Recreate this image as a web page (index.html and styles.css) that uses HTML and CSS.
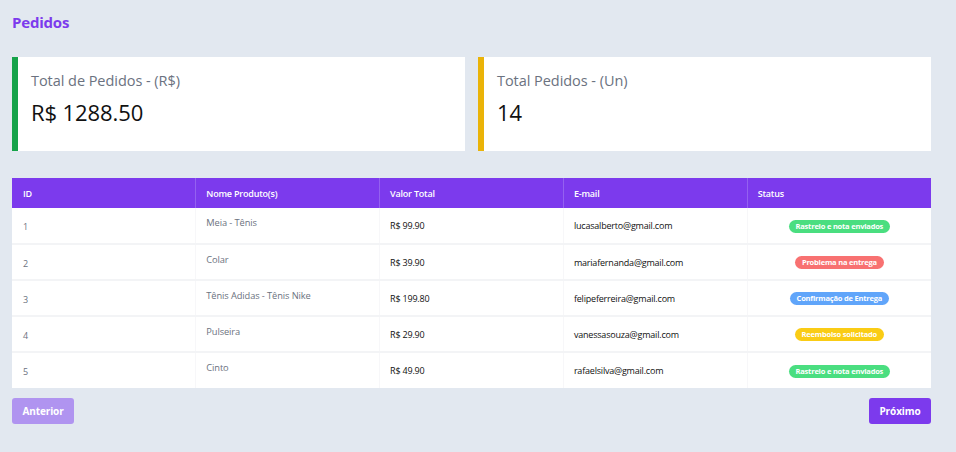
FILE: index.html
```html
<!DOCTYPE html>
<html lang="pt-BR">
<head>
<meta charset="utf-8">
<title>Pedidos</title>
<link rel="stylesheet" href="styles.css">
</head>
<body>
<main class="page">
  <h1 class="title">Pedidos</h1>
  <section class="cards">
    <div class="card card-green">
      <div class="card-label">Total de Pedidos - (R$)</div>
      <div class="card-value">R$ 1288.50</div>
    </div>
    <div class="card card-yellow">
      <div class="card-label">Total Pedidos - (Un)</div>
      <div class="card-value">14</div>
    </div>
  </section>
  <table class="orders">
    <thead>
      <tr><th>ID</th><th>Nome Produto(s)</th><th>Valor Total</th><th>E-mail</th><th>Status</th></tr>
    </thead>
    <tbody>
      <tr><td class="id">1</td><td class="name">Meia - Tênis</td><td>R$ 99.90</td><td>lucasalberto@gmail.com</td><td class="status"><span class="badge green">Rastreio e nota enviados</span></td></tr>
      <tr><td class="id">2</td><td class="name">Colar</td><td>R$ 39.90</td><td>mariafernanda@gmail.com</td><td class="status"><span class="badge red">Problema na entrega</span></td></tr>
      <tr><td class="id">3</td><td class="name">Tênis Adidas - Tênis Nike</td><td>R$ 199.80</td><td>felipeferreira@gmail.com</td><td class="status"><span class="badge blue">Confirmação de Entrega</span></td></tr>
      <tr><td class="id">4</td><td class="name">Pulseira</td><td>R$ 29.90</td><td>vanessasouza@gmail.com</td><td class="status"><span class="badge yellow">Reembolso solicitado</span></td></tr>
      <tr><td class="id">5</td><td class="name">Cinto</td><td>R$ 49.90</td><td>rafaelsilva@gmail.com</td><td class="status"><span class="badge green">Rastreio e nota enviados</span></td></tr>
    </tbody>
  </table>
  <div class="pager">
    <button class="btn btn-disabled" type="button">Anterior</button>
    <button class="btn" type="button">Próximo</button>
  </div>
</main>
</body>
</html>
```
FILE: styles.css
```css
* { box-sizing: border-box; }
html, body { margin: 0; }
body {
  background: #e2e8f0;
  font-family: "Open Sans", "Noto Sans", sans-serif;
  width: 956px;
  height: 452px;
  overflow: hidden;
}
.page {
  padding: 12px 25px 0 12px;
}
.title {
  margin: 0;
  color: #7c3aed;
  font-size: 15px;
  font-weight: 700;
  line-height: 20px;
  letter-spacing: -0.2px;
}
.cards {
  display: grid;
  grid-template-columns: 1fr 1fr;
  gap: 13px;
  margin-top: 25px;
}
.card {
  background: #fff;
  height: 94px;
  border-left: 6px solid #16a34a;
  padding: 14px 13px;
}
.card-yellow { border-left-color: #eab308; }
.card-label {
  color: #6b7280;
  font-size: 14.5px;
  line-height: 20px;
  letter-spacing: -0.05px;
}
.card-value {
  color: #111;
  font-size: 22px;
  font-weight: 400;
  line-height: 30px;
  margin-top: 6px;
  letter-spacing: -0.1px;
}
.orders {
  margin-top: 27px;
  width: 919px;
  border-collapse: collapse;
  table-layout: fixed;
  background: #fff;
}
.orders th {
  background: #7c3aed;
  color: #fff;
  font-size: 9px;
  font-weight: 600;
  text-align: left;
  height: 30px;
  padding: 0 10px;
  border-right: 1px solid #9461f0;
  letter-spacing: -0.2px;
}
.orders th:first-child, .orders td:first-child { padding-left: 11px; }
.orders th:last-child { border-right: none; }
.orders td {
  height: 36px;
  padding: 0 10px;
  font-size: 9px;
  color: #111;
  border-bottom: 2px solid #f3f4f6;
  border-right: 1px solid #f7f7f9;
  letter-spacing: -0.2px;
}
.orders tr:last-child td { border-bottom: none; }
.orders td:last-child { border-right: none; }
.orders td.id { color: #6b7280; padding-top: 2px; }
.orders td.name { color: #6b7280; padding-bottom: 6px; font-size: 9.3px; letter-spacing: -0.1px; }
.orders td.status { text-align: center; }
.badge {
  display: inline-block;
  color: #fff;
  font-size: 7.5px;
  font-weight: 700;
  line-height: 13px;
  padding: 0 7px;
  border-radius: 7px;
  letter-spacing: -0.2px;
}
.green { background: #4ade80; }
.red { background: #f87171; }
.blue { background: #60a5fa; }
.yellow { background: #facc15; }
.pager {
  display: flex;
  justify-content: space-between;
  margin-top: 10px;
  width: 919px;
}
.btn {
  font-family: inherit;
  background: #7c3aed;
  color: #fff;
  font-weight: 700;
  font-size: 10px;
  border: none;
  border-radius: 3px;
  height: 26px;
  width: 62px;
  padding: 0;
  letter-spacing: -0.1px;
}
.btn-disabled { background: #b094f0; }
```
